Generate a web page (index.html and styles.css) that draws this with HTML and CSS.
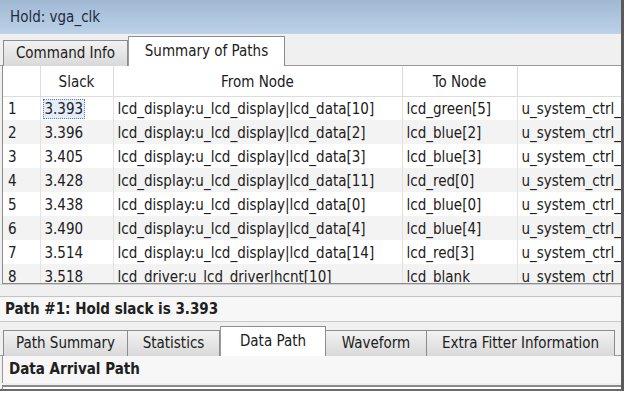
FILE: index.html
```html
<!DOCTYPE html>
<html lang="en">
<head>
  <meta charset="UTF-8">
  <title>Hold: vga_clk</title>
  <link rel="stylesheet" href="styles.css">
</head>
<body>
  <div class="window">
    <!-- title -->
    <div class="title-bar">Hold: vga_clk</div>

    <!-- top tabs -->
    <div class="tab-strip">
      <div class="tab">Command Info</div>
      <div class="tab active">Summary of Paths</div>
    </div>

    <!-- paths table -->
    <div class="table-panel">
      <table class="paths">
        <colgroup>
          <col class="c-num"><col class="c-slack"><col class="c-from"><col class="c-to"><col class="c-rest">
        </colgroup>
        <thead>
          <tr><th></th><th>Slack</th><th>From Node</th><th>To Node</th><th></th></tr>
        </thead>
        <tbody>
          <tr><td>1</td><td><span class="focus">3.393</span></td><td>lcd_display:u_lcd_display|lcd_data[10]</td><td>lcd_green[5]</td><td>u_system_ctrl_</td></tr>
          <tr><td>2</td><td>3.396</td><td>lcd_display:u_lcd_display|lcd_data[2]</td><td>lcd_blue[2]</td><td>u_system_ctrl_</td></tr>
          <tr><td>3</td><td>3.405</td><td>lcd_display:u_lcd_display|lcd_data[3]</td><td>lcd_blue[3]</td><td>u_system_ctrl_</td></tr>
          <tr><td>4</td><td>3.428</td><td>lcd_display:u_lcd_display|lcd_data[11]</td><td>lcd_red[0]</td><td>u_system_ctrl_</td></tr>
          <tr><td>5</td><td>3.438</td><td>lcd_display:u_lcd_display|lcd_data[0]</td><td>lcd_blue[0]</td><td>u_system_ctrl_</td></tr>
          <tr><td>6</td><td>3.490</td><td>lcd_display:u_lcd_display|lcd_data[4]</td><td>lcd_blue[4]</td><td>u_system_ctrl_</td></tr>
          <tr><td>7</td><td>3.514</td><td>lcd_display:u_lcd_display|lcd_data[14]</td><td>lcd_red[3]</td><td>u_system_ctrl_</td></tr>
          <tr><td>8</td><td>3.518</td><td>lcd_driver:u_lcd_driver|hcnt[10]</td><td>lcd_blank</td><td>u_system_ctrl_</td></tr>
        </tbody>
      </table>
    </div>

    <div class="splitter"></div>

    <!-- path detail -->
    <div class="path-title">Path #1: Hold slack is 3.393</div>

    <div class="tab-strip lower">
      <div class="tab w-sum">Path Summary</div>
      <div class="tab w-stat">Statistics</div>
      <div class="tab active w-data">Data Path</div>
      <div class="tab w-wave">Waveform</div>
      <div class="tab w-extra">Extra Fitter Information</div>
    </div>

    <div class="section-title">Data Arrival Path</div>
    <div class="section-body"></div>
  </div>
</body>
</html>
```

FILE: styles.css
```css
body {
  margin: 0;
  background: #ffffff;
  font-family: "DejaVu Sans Condensed", "DejaVu Sans", sans-serif;
  font-size: 15px;
  color: #202020;
}

.window {
  width: 621px;
  height: 389px;
  overflow: hidden;
  background: #f0f0f0;
  border-right: 3px solid #5a5a5a;
  border-bottom: 2px solid #6a6a6a;
  display: flex;
  flex-direction: column;
}

/* title */
.title-bar {
  height: 34px;
  flex: none;
  box-sizing: border-box;
  padding: 8px 0 0 10px;
  font-size: 15px;
  color: #1e2a3a;
  background: linear-gradient(#a0b8d2, #bbd2e9);
}

/* tabs */
.tab-strip {
  height: 32px;
  flex: none;
  display: flex;
  align-items: flex-end;
  padding-left: 3px;
  box-sizing: border-box;
  border-bottom: 1px solid #9a9a9a;
}
.tab {
  height: 26px;
  box-sizing: border-box;
  margin-bottom: -1px;
  border: 1px solid #8c8c8c;
  border-bottom: none;
  background: linear-gradient(#f2f2f2, #d9d9d9);
  text-align: center;
  padding-top: 3px;
}
.tab + .tab { border-left: none; }
.tab.active {
  height: 30px;
  padding-top: 5px;
  background: #ffffff;
  border-left: 1px solid #9a9a9a;
}
.tab-strip > .tab:first-child { width: 125px; }
.tab-strip > .tab.active:nth-child(2) { width: 157px; }

/* table */
.table-panel {
  height: 217px;
  flex: none;
  overflow: hidden;
  margin-left: 2px;
  background: #ffffff;
  border-left: 1px solid #8c8c8c;
  border-bottom: 1px solid #8c8c8c;
}
.paths {
  border-collapse: collapse;
  table-layout: fixed;
  width: 622px;
}
.c-num { width: 37px; }
.c-slack { width: 73px; }
.c-from { width: 289px; }
.c-to { width: 115px; }
.c-rest { width: 108px; }
.paths th {
  height: 30px;
  box-sizing: border-box;
  font-weight: normal;
  text-align: center;
  border-right: 1px solid #dcdcdc;
  border-bottom: 1px solid #dcdcdc;
  padding: 3px 0 0;
}
.paths td {
  height: 24px;
  box-sizing: border-box;
  padding: 2px 0 0 4px;
  white-space: nowrap;
  overflow: hidden;
  border-right: 1px solid #e2e2e2;
}
.paths td:first-child { padding-left: 5px; }
.paths tbody tr:nth-child(even) td { background: #f3f3f3; }
.focus {
  display: inline-block;
  margin-left: -2px;
  padding: 0 1px;
  border: 1px dotted #5a7fb0;
  background: #e3ecf8;
}

.splitter {
  height: 13px;
  flex: none;
  border-top: 1px solid #d0d0d0;
  border-bottom: 1px solid #c4c4c4;
  box-sizing: border-box;
}

/* path detail */
.path-title {
  height: 25px;
  flex: none;
  box-sizing: border-box;
  padding: 3px 0 0 5px;
  font-weight: bold;
  background: #f7f7f7;
  border-bottom: 1px solid #c8c8c8;
}
.tab-strip.lower { height: 34px; }
.w-sum { width: 125px; }
.w-stat { width: 92px; }
.tab.w-data { width: 106px; }
.w-wave { width: 101px; }
.w-extra { width: 188px; }

.section-title {
  height: 27px;
  flex: none;
  box-sizing: border-box;
  padding: 4px 0 0 6px;
  font-weight: bold;
  background: #f7f7f7;
  border-left: 1px solid #9a9a9a;
  margin-left: 2px;
}
.section-body {
  flex: 1;
  margin: 2px 0 0 2px;
  border-top: 2px solid #8a8a8a;
  border-left: 1px solid #8a8a8a;
  background: #ffffff;
}
```
